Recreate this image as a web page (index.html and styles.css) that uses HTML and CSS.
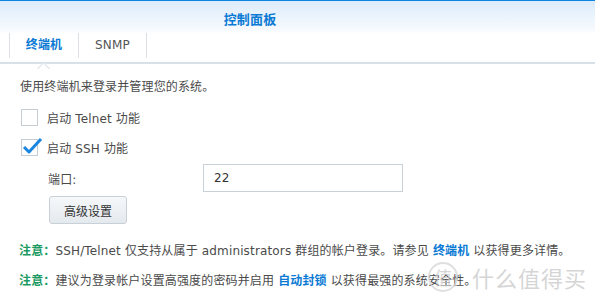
FILE: index.html
```html
<!DOCTYPE html>
<html lang="zh-CN">
<head>
    <meta charset="UTF-8">
    <title>控制面板</title>
    <link rel="stylesheet" href="styles.css">
</head>
<body>
    <div class="window">
        <div class="header">
            <div class="title">控制面板</div>
            <div class="tabs">
                <div class="tab active">终端机</div>
                <div class="tab">SNMP</div>
            </div>
        </div>
        <div class="content">
            <p class="desc">使用终端机来登录并管理您的系统。</p>
            <label class="check-row">
                <span class="checkbox"></span>
                <span>启动 Telnet 功能</span>
            </label>
            <label class="check-row">
                <span class="checkbox checked">
                    <svg width="22" height="20" viewBox="0 0 22 20"><path d="M2 11 L7 16 L19 3" fill="none" stroke="#1a86e0" stroke-width="3" stroke-linejoin="round"/></svg>
                </span>
                <span>启动 SSH 功能</span>
            </label>
            <div class="field-row">
                <span class="field-label">端口:</span>
                <div class="input">22</div>
            </div>
            <button class="adv-btn">高级设置</button>
            <p class="note"><span class="note-tag">注意：</span>SSH/Telnet 仅支持从属于 administrators 群组的帐户登录。请参见 <a class="link">终端机</a> 以获得更多详情。</p>
            <p class="note"><span class="note-tag">注意：</span>建议为登录帐户设置高强度的密码并启用 <a class="link">自动封锁</a> 以获得最强的系统安全性。</p>
        </div>
        <div class="watermark">
            <span class="wm-logo">值</span>
            <span class="wm-text">什么值得买</span>
        </div>
    </div>
</body>
</html>
```

FILE: styles.css
```css
body {
    margin: 0;
    font-family: 'DejaVu Sans', 'Noto Sans CJK SC', sans-serif;
    font-size: 12px;
    letter-spacing: 0.15px;
    color: #4a4a4a;
    background-color: white;
}
.window {
    position: relative;
    width: 595px;
    height: 303px;
    overflow: hidden;
}
.header {
    border-top: 1px solid #0a84e0;
    background: linear-gradient(#dcecfa 0px, #f4f9fe 26px, #ffffff 34px);
    border-bottom: 2px solid #d9e0e7;
    height: 61px;
    position: relative;
}
.title {
    text-align: center;
    padding-top: 8px;
    height: 21px;
    padding-right: 95px;
    font-size: 13px;
    font-weight: bold;
    color: #0a7ad4;
}
.tabs {
    display: flex;
    margin-left: 9px;
    margin-top: 3px;
}
.tab {
    height: 25px;
    line-height: 25px;
    width: 68px;
    text-align: center;
    border-left: 1px solid #dcdfe3;
    color: #555;
    font-size: 12px;
    position: relative;
}
.tab:last-child {
    width: 67px;
    border-right: 1px solid #dcdfe3;
}
.tab.active {
    color: #0a7ad4;
    font-weight: bold;
}
.tab.active::after {
    content: '';
    position: absolute;
    left: 29px;
    top: 31px;
    width: 8px;
    height: 8px;
    background: white;
    border-left: 1px solid #d9e0e7;
    border-top: 1px solid #d9e0e7;
    transform: rotate(45deg);
}
.content {
    padding: 15px 0 0 20px;
}
.desc {
    margin: 0 0 13px 0;
    line-height: 16px;
}
.check-row {
    display: flex;
    align-items: center;
    gap: 9px;
    height: 18px;
    margin-bottom: 12px;
    margin-left: 1px;
}
.check-row + .check-row {
    margin-bottom: 8px;
}
.checkbox {
    width: 15px;
    height: 15px;
    border: 1px solid #c4ccd4;
    background: white;
    position: relative;
}
.checkbox svg {
    position: absolute;
    left: 0;
    top: -4px;
}
.field-row {
    display: flex;
    align-items: center;
    margin-left: 28px;
    height: 28px;
}
.field-label {
    width: 155px;
}
.input {
    width: 188px;
    height: 26px;
    line-height: 26px;
    border: 1px solid #c8d0d8;
    padding-left: 10px;
    font-size: 12px;
    color: #333;
}
.adv-btn {
    display: block;
    margin: 4px 0 0 29px;
    width: 78px;
    height: 28px;
    border: 1px solid #c8d0da;
    border-radius: 3px;
    background: linear-gradient(#f6f8fa, #e4e9ee);
    font-family: 'DejaVu Sans', 'Noto Sans CJK SC', sans-serif;
    font-size: 12px;
    color: #333;
}
.note {
    margin: 19px 0 0 -1px;
    line-height: 16px;
    white-space: nowrap;
}
.note + .note {
    margin-top: 14px;
}
.note-tag {
    color: #1a9a62;
    font-weight: bold;
}
.link {
    color: #0a7ad4;
    font-weight: bold;
}
.watermark {
    position: absolute;
    left: 428px;
    top: 261px;
    display: flex;
    align-items: center;
    gap: 14px;
    color: rgba(200, 200, 200, 0.75);
    font-family: 'Noto Sans CJK SC', sans-serif;
}
.wm-logo {
    width: 26px;
    height: 26px;
    border-radius: 50%;
    border: 2px solid rgba(210, 210, 210, 0.7);
    font-size: 18px;
    line-height: 26px;
    text-align: center;
}
.wm-text {
    font-size: 22px;
    letter-spacing: 1px;
}
```
